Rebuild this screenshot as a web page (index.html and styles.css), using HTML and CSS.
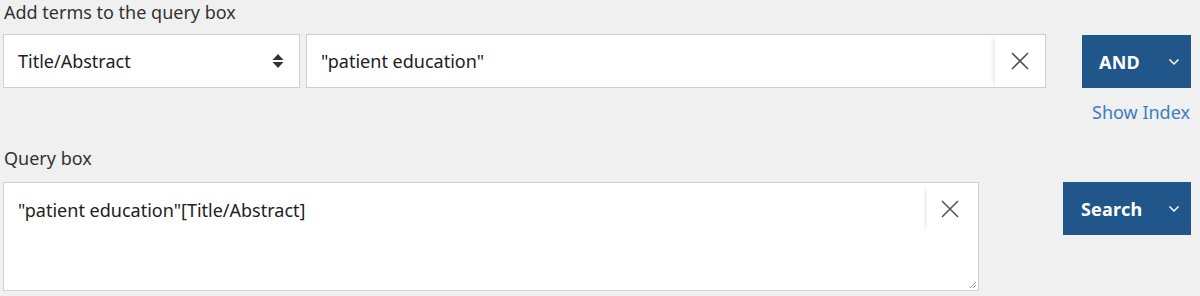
FILE: index.html
```html
<!DOCTYPE html>
<html>
<head>
<meta charset="utf-8">
<link rel="stylesheet" href="styles.css">
</head>
<body>
<div class="builder">
  <div class="label">Add terms to the query box</div>
  <div class="term-row">
    <div class="select">
      <span>Title/Abstract</span>
      <svg class="updown" width="12" height="16" viewBox="0 0 12 16"><path d="M6 1 L11.5 7 H0.5 Z M6 15 L11.5 9 H0.5 Z" fill="#333"/></svg>
    </div>
    <div class="input">
      <span class="value">"patient education"</span>
      <div class="clear">
        <svg width="20" height="20" viewBox="0 0 20 20"><path d="M2 2 L18 18 M18 2 L2 18" stroke="#555" stroke-width="1.6" fill="none"/></svg>
      </div>
    </div>
    <div class="btn and">
      <span class="btn-text">AND</span>
      <svg class="chev" width="12" height="8" viewBox="0 0 12 8"><path d="M1.5 1.5 L6 6 L10.5 1.5" stroke="#fff" stroke-width="1.5" fill="none"/></svg>
    </div>
  </div>
  <div class="index-row"><a class="show-index">Show Index</a></div>
  <div class="label label2">Query box</div>
  <div class="query-row">
    <div class="textarea">
      <span class="value">"patient education"[Title/Abstract]</span>
      <div class="clear clear2">
        <svg width="20" height="20" viewBox="0 0 20 20"><path d="M2 2 L18 18 M18 2 L2 18" stroke="#555" stroke-width="1.6" fill="none"/></svg>
      </div>
      <svg class="grip" width="8" height="8" viewBox="0 0 8 8"><path d="M7 1 L1 7 M7 4 L4 7" stroke="#999" stroke-width="1" fill="none"/></svg>
    </div>
    <div class="btn search">
      <span class="btn-text">Search</span>
      <svg class="chev" width="12" height="8" viewBox="0 0 12 8"><path d="M1.5 1.5 L6 6 L10.5 1.5" stroke="#fff" stroke-width="1.5" fill="none"/></svg>
    </div>
  </div>
</div>
</body>
</html>
```

FILE: styles.css
```css
html, body {
  margin: 0;
  padding: 0;
  background: #f0f0f0;
}
body {
  font-family: "Noto Sans", "Open Sans", sans-serif;
  color: #212121;
  font-size: 18px;
}
.builder {
  padding: 0 9px 0 3px;
}
.label {
  height: 34px;
  line-height: 24px;
  padding-left: 1px;
  color: #333;
}
.label2 {
  height: 36px;
  line-height: 24px;
}
.term-row {
  display: flex;
  align-items: flex-start;
  height: 54px;
}
.select {
  box-sizing: border-box;
  width: 297px;
  height: 54px;
  background: #fff;
  border: 1px solid #cfcfcf;
  display: flex;
  align-items: center;
  justify-content: space-between;
  padding: 0 15px 0 14px;
}
.input {
  box-sizing: border-box;
  width: 740px;
  margin-left: 6px;
  height: 54px;
  background: #fff;
  border: 1px solid #cfcfcf;
  display: flex;
  align-items: center;
  justify-content: space-between;
  padding-left: 14px;
}
.clear {
  width: 50px;
  height: 52px;
  display: flex;
  align-items: center;
  justify-content: center;
  background: #fff;
  box-shadow: -4px 0 5px -3px rgba(0,0,0,0.12);
}
.btn {
  box-sizing: border-box;
  background: #205689;
  color: #fff;
  font-weight: bold;
  display: flex;
  align-items: center;
  justify-content: space-between;
  margin-left: auto;
}
.and {
  width: 109px;
  height: 53px;
  margin-top: 1px;
  padding: 0 11px 0 17px;
}
.search {
  width: 128px;
  height: 53px;
  padding: 0 11px 0 18px;
}
.btn-text {
  font-size: 18px;
  letter-spacing: 0.2px;
}
.index-row {
  display: flex;
  justify-content: flex-end;
  padding-top: 11px;
  height: 47px;
  line-height: 26px;
}
.show-index {
  color: #3a7fc1;
  margin-right: 1px;
}
.query-row {
  display: flex;
  align-items: flex-start;
}
.textarea {
  position: relative;
  box-sizing: border-box;
  width: 976px;
  height: 109px;
  background: #fff;
  border: 1px solid #cfcfcf;
  border-bottom-color: #d6d6d6;
  padding: 15px 0 0 14px;
}
.clear2 {
  position: absolute;
  top: 3px;
  right: 6px;
  width: 45px;
  height: 45px;
}
.grip {
  position: absolute;
  right: 1px;
  bottom: 1px;
}
```
